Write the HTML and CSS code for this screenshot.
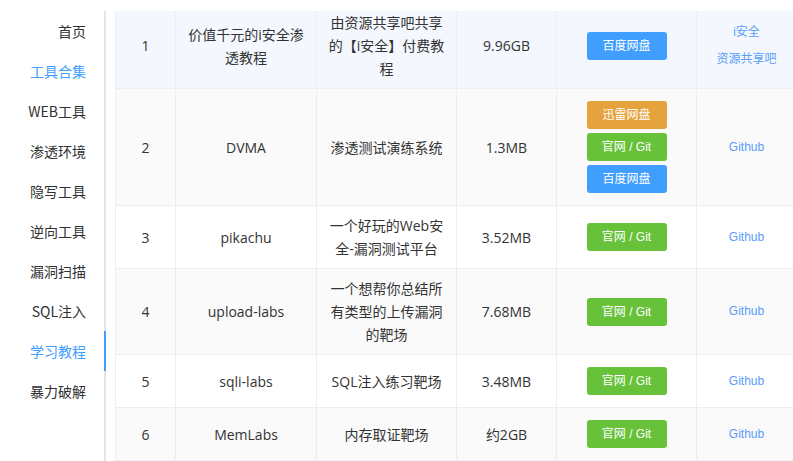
FILE: index.html
```html
<!DOCTYPE html>
<html lang="zh-CN">
<head>
<meta charset="utf-8">
<title>学习教程</title>
<link rel="stylesheet" href="styles.css">
</head>
<body>
<div class="page">
  <nav class="menu">
    <div class="menu-item">首页</div>
    <div class="menu-item is-blue">工具合集</div>
    <div class="menu-item">WEB工具</div>
    <div class="menu-item">渗透环境</div>
    <div class="menu-item">隐写工具</div>
    <div class="menu-item">逆向工具</div>
    <div class="menu-item">漏洞扫描</div>
    <div class="menu-item">SQL注入</div>
    <div class="menu-item is-blue is-active">学习教程</div>
    <div class="menu-item">暴力破解</div>
  </nav>
  <main class="table-wrap">
    <div class="data">
      <div class="row row-current">
        <div class="cell">1</div>
        <div class="cell">价值千元的i安全渗透教程</div>
        <div class="cell">由资源共享吧共享的【i安全】付费教程</div>
        <div class="cell">9.96GB</div>
        <div class="cell"><div class="btns"><a class="btn btn-blue">百度网盘</a></div></div>
        <div class="cell"><div class="links"><a class="link">i安全</a><a class="link">资源共享吧</a></div></div>
      </div>
      <div class="row row-stripe">
        <div class="cell">2</div>
        <div class="cell">DVMA</div>
        <div class="cell">渗透测试演练系统</div>
        <div class="cell">1.3MB</div>
        <div class="cell"><div class="btns"><a class="btn btn-orange">迅雷网盘</a><a class="btn btn-green">官网 / Git</a><a class="btn btn-blue">百度网盘</a></div></div>
        <div class="cell"><a class="link">Github</a></div>
      </div>
      <div class="row">
        <div class="cell">3</div>
        <div class="cell">pikachu</div>
        <div class="cell">一个好玩的Web安全-漏洞测试平台</div>
        <div class="cell">3.52MB</div>
        <div class="cell"><div class="btns"><a class="btn btn-green">官网 / Git</a></div></div>
        <div class="cell"><a class="link">Github</a></div>
      </div>
      <div class="row row-stripe">
        <div class="cell">4</div>
        <div class="cell">upload-labs</div>
        <div class="cell">一个想帮你总结所有类型的上传漏洞的靶场</div>
        <div class="cell">7.68MB</div>
        <div class="cell"><div class="btns"><a class="btn btn-green">官网 / Git</a></div></div>
        <div class="cell"><a class="link">Github</a></div>
      </div>
      <div class="row">
        <div class="cell">5</div>
        <div class="cell">sqli-labs</div>
        <div class="cell">SQL注入练习靶场</div>
        <div class="cell">3.48MB</div>
        <div class="cell"><div class="btns"><a class="btn btn-green">官网 / Git</a></div></div>
        <div class="cell"><a class="link">Github</a></div>
      </div>
      <div class="row row-stripe">
        <div class="cell">6</div>
        <div class="cell">MemLabs</div>
        <div class="cell">内存取证靶场</div>
        <div class="cell">约2GB</div>
        <div class="cell"><div class="btns"><a class="btn btn-green">官网 / Git</a></div></div>
        <div class="cell"><a class="link">Github</a></div>
      </div>
    </div>
  </main>
</div>
</body>
</html>
```

FILE: styles.css
```css
html, body {
  margin: 0;
  padding: 0;
  background: #fff;
  height: 100%;
  overflow: hidden;
}
body {
  font-family: "Open Sans", "Noto Sans CJK SC", sans-serif;
  font-size: 14px;
  color: #333;
}
.page {
  display: flex;
  align-items: stretch;
  margin-top: 11px;
  height: 450px;
}
.menu {
  width: 104px;
  flex: none;
  border-right: 2px solid #e6e6e6;
  display: flex;
  flex-direction: column;
}
.menu-item {
  height: 40px;
  line-height: 40px;
  text-align: right;
  padding-right: 18px;
  color: #303133;
  font-family: "Noto Sans CJK SC", sans-serif;
  font-size: 14px;
  position: relative;
}
.menu-item.is-blue {
  color: #409eff;
}
.menu-item.is-active::after {
  content: "";
  position: absolute;
  right: -2px;
  top: 0;
  width: 2px;
  height: 40px;
  background: #409eff;
}
.table-wrap {
  flex: 1;
  min-width: 0;
  margin-left: 9px;
  overflow: hidden;
}
.data {
  margin-top: -8px;
  width: 682px;
  border-left: 1px solid #ebeef5;
}
.row {
  display: grid;
  grid-template-columns: 60px 141px 140px 100px 140px 100px;
  border-bottom: 1px solid #ebeef5;
  background: #fff;
}
.row-current { background: #f4f8fe; }
.row-stripe { background: #fafafa; }
.cell {
  box-sizing: border-box;
  border-right: 1px solid #ebeef5;
  padding: 8px 10px;
  display: flex;
  align-items: center;
  justify-content: center;
  text-align: center;
  line-height: 23px;
  min-width: 0;
}
.btns {
  display: flex;
  flex-direction: column;
  gap: 4px;
  padding: 4px 0;
}
.btn {
  display: block;
  width: 80px;
  height: 28px;
  line-height: 28px;
  border-radius: 3px;
  color: #fff;
  font-size: 12px;
  font-family: "Liberation Sans", "Noto Sans CJK SC", sans-serif;
  text-align: center;
}
.btn-blue { background: #409eff; }
.btn-green { background: #67c23a; }
.btn-orange { background: #e6a23c; }
.links {
  display: flex;
  flex-direction: column;
  gap: 4px;
}
.link {
  display: block;
  color: #5a9cf8;
  font-size: 12px;
  font-family: "Liberation Sans", "Noto Sans CJK SC", sans-serif;
  line-height: 23px;
  white-space: nowrap;
}
```
